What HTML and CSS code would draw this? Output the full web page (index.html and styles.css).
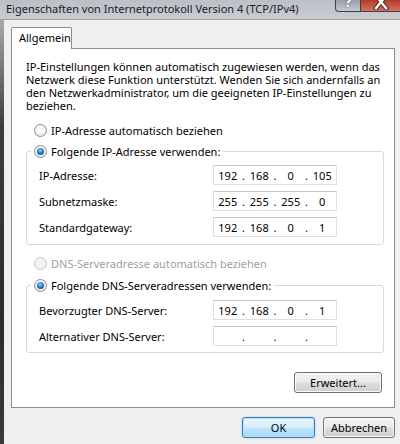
FILE: index.html
```html
<!DOCTYPE html>
<html lang="de">
<head>
<meta charset="utf-8">
<title>Eigenschaften von Internetprotokoll Version 4 (TCP/IPv4)</title>
<link rel="stylesheet" href="styles.css">
</head>
<body>
<div class="window">
  <div class="titlebar">
    <span class="title">Eigenschaften von Internetprotokoll Version 4 (TCP/IPv4)</span>
    <div class="caption-buttons">
      <span class="cbtn help"><span class="help-glyph">?</span></span>
      <span class="cbtn close">
        <svg class="close-glyph" width="16" height="14" viewBox="0 0 16 14">
          <path d="M3 0 L13 12 M13 0 L3 12" stroke="#5a2a22" stroke-width="4.5" stroke-linecap="square"/>
          <path d="M3 0 L13 12 M13 0 L3 12" stroke="#ffffff" stroke-width="2.4" stroke-linecap="square"/>
        </svg>
      </span>
    </div>
  </div>
  <div class="frame">
    <div class="edge"></div>
    <div class="client">
      <div class="tabs"><span class="tab">Allgemein</span></div>
      <div class="panel">
        <p class="intro">IP-Einstellungen können automatisch zugewiesen werden, wenn das<br>Netzwerk diese Funktion unterstützt. Wenden Sie sich andernfalls an<br>den Netzwerkadministrator, um die geeigneten IP-Einstellungen zu<br>beziehen.</p>
        <div class="option first"><span class="radio"></span><span>IP-Adresse automatisch beziehen</span></div>
        <fieldset class="group">
          <legend class="legend"><span class="radio on"></span><span>Folgende IP-Adresse verwenden:</span></legend>
          <div class="field-row">
            <span class="label">IP-Adresse:</span>
            <span class="ipbox"><span class="oct">192</span><span class="dot">.</span><span class="oct">168</span><span class="dot">.</span><span class="oct">0</span><span class="dot">.</span><span class="oct">105</span></span>
          </div>
          <div class="field-row">
            <span class="label">Subnetzmaske:</span>
            <span class="ipbox"><span class="oct">255</span><span class="dot">.</span><span class="oct">255</span><span class="dot">.</span><span class="oct">255</span><span class="dot">.</span><span class="oct">0</span></span>
          </div>
          <div class="field-row">
            <span class="label">Standardgateway:</span>
            <span class="ipbox"><span class="oct">192</span><span class="dot">.</span><span class="oct">168</span><span class="dot">.</span><span class="oct">0</span><span class="dot">.</span><span class="oct">1</span></span>
          </div>
        </fieldset>
        <div class="option disabled"><span class="radio"></span><span>DNS-Serveradresse automatisch beziehen</span></div>
        <fieldset class="group dns">
          <legend class="legend"><span class="radio on"></span><span>Folgende DNS-Serveradressen verwenden:</span></legend>
          <div class="field-row">
            <span class="label">Bevorzugter DNS-Server:</span>
            <span class="ipbox"><span class="oct">192</span><span class="dot">.</span><span class="oct">168</span><span class="dot">.</span><span class="oct">0</span><span class="dot">.</span><span class="oct">1</span></span>
          </div>
          <div class="field-row">
            <span class="label">Alternativer DNS-Server:</span>
            <span class="ipbox"><span class="oct"></span><span class="dot">.</span><span class="oct"></span><span class="dot">.</span><span class="oct"></span><span class="dot">.</span><span class="oct"></span></span>
          </div>
        </fieldset>
        <div class="panel-actions"><button class="btn advanced">Erweitert...</button></div>
      </div>
      <div class="dialog-actions">
        <button class="btn default ok">OK</button>
        <button class="btn cancel">Abbrechen</button>
      </div>
    </div>
  </div>
</div>
</body>
</html>
```
FILE: styles.css
```css
* { box-sizing: border-box; }
html, body { margin: 0; padding: 0; }
body {
  width: 400px;
  height: 444px;
  overflow: hidden;
  background: #f0f0f0;
  font-family: "Noto Sans", "Open Sans", sans-serif;
  font-size: 11px;
  color: #000;
}
.window { display: flex; flex-direction: column; height: 444px; }

.titlebar {
  height: 20px;
  display: flex;
  align-items: flex-start;
  background: linear-gradient(#b9c0c7, #c8cdd2);
  border-bottom: 1px solid #9aa0a6;
  padding-left: 6px;
}
.title { font-size: 11px; line-height: 18px; color: #1a1a1a; white-space: nowrap; }
.caption-buttons { margin-left: auto; display: flex; }
.cbtn {
  position: relative;
  height: 12px;
  overflow: hidden;
  border: 1px solid #3d4045;
  border-top: none;
}
.help {
  width: 25px;
  border-radius: 0 0 0 4px;
  background: linear-gradient(#98a0a8, #c3c9cf);
  border-right: none;
}
.close {
  width: 40px;
  background: linear-gradient(#b33a2b, #d6705f);
  border-right: none;
}
.help-glyph {
  position: absolute;
  left: 8px;
  top: -6px;
  font: bold 14px/16px "DejaVu Sans", sans-serif;
  color: #fff;
  text-shadow: 0 0 1px #333, 0 0 1px #333;
}
.close-glyph { position: absolute; left: 12px; top: -4px; }

.frame { flex: 1; display: flex; }
.edge { width: 4px; background: linear-gradient(#a9a9a9, #3c3c3c 25%, #2c2c2c 70%, #3a3a3a); }
.client { flex: 1; display: flex; flex-direction: column; padding: 7px 5px 0 7px; }

.tabs { display: flex; margin-bottom: -1px; position: relative; z-index: 1; }
.tab {
  width: 61px;
  height: 22px;
  padding: 0 0 0 7px;
  line-height: 20px;
  background: #fff;
  border: 1px solid #898c95;
  border-bottom: none;
  border-radius: 2px 2px 0 0;
  white-space: nowrap;
}

.panel {
  height: 360px;
  background: #fff;
  border: 1px solid #898c95;
  padding: 0 10px 0 14px;
}
.intro { margin: 11px 0 0; line-height: 13px; white-space: nowrap; }

.option, .legend { display: flex; align-items: center; gap: 4px; height: 13px; line-height: 13px; white-space: nowrap; }
.option { margin-left: 8px; }
.option.first { margin-top: 12px; }
.option.disabled { margin-top: 12px; color: #a0a0a0; }

.radio {
  width: 13px;
  height: 13px;
  flex: none;
  border-radius: 50%;
  border: 1px solid #8a8d92;
  background: radial-gradient(circle at 50% 40%, #ffffff 20%, #dcdde0 100%);
  position: relative;
}
.radio.on::after {
  content: "";
  position: absolute;
  left: 2px; top: 2px;
  width: 7px; height: 7px;
  border-radius: 50%;
  background: radial-gradient(circle at 45% 35%, #9fd3f5 0%, #2a78c0 45%, #123e73 100%);
}
.disabled .radio { border-color: #c6c6c6; background: #f2f2f2; }

.group {
  margin: 8px 0 0;
  padding: 7px 0 7px 0;
  border: 1px solid #d5dadf;
  border-radius: 3px;
  min-width: 0;
}
.group.dns { margin-top: 9px; padding-top: 8px; padding-bottom: 6px; }
.legend { padding: 0 3px; margin-left: 4px; }

.field-row { display: flex; align-items: center; height: 20px; padding-left: 12px; }
.field-row + .field-row { margin-top: 6px; }
.label { width: 174px; white-space: nowrap; }
.ipbox {
  width: 124px;
  height: 20px;
  display: flex;
  align-items: center;
  border: 1px solid #dcdfe3;
  border-top-color: #c6c9ce;
  background: #fff;
}
.oct { flex: 1; text-align: center; }
.dot { width: 4px; text-align: center; }

.panel-actions { display: flex; justify-content: flex-end; margin-top: 19px; padding-right: 2px; }
.btn {
  height: 21px;
  padding: 0;
  font: inherit;
  color: #000;
  border: 1px solid #707070;
  border-radius: 3px;
  background: linear-gradient(#f2f2f2 0%, #ebebeb 48%, #dddddd 52%, #cfcfcf 100%);
  box-shadow: inset 0 0 0 1px #fbfbfb;
}
.advanced { width: 88px; }
.dialog-actions { display: flex; justify-content: flex-end; gap: 8px; margin-top: 9px; }
.ok { width: 73px; }
.cancel { width: 72px; }
.btn.default {
  border-color: #3c7fb1;
  background: linear-gradient(#eaf6fd 0%, #d9f0fc 48%, #bee6fd 52%, #a7d9f5 100%);
  box-shadow: inset 0 0 0 1px #b8e0f6, 0 0 2px #7fc4ee;
}
```
